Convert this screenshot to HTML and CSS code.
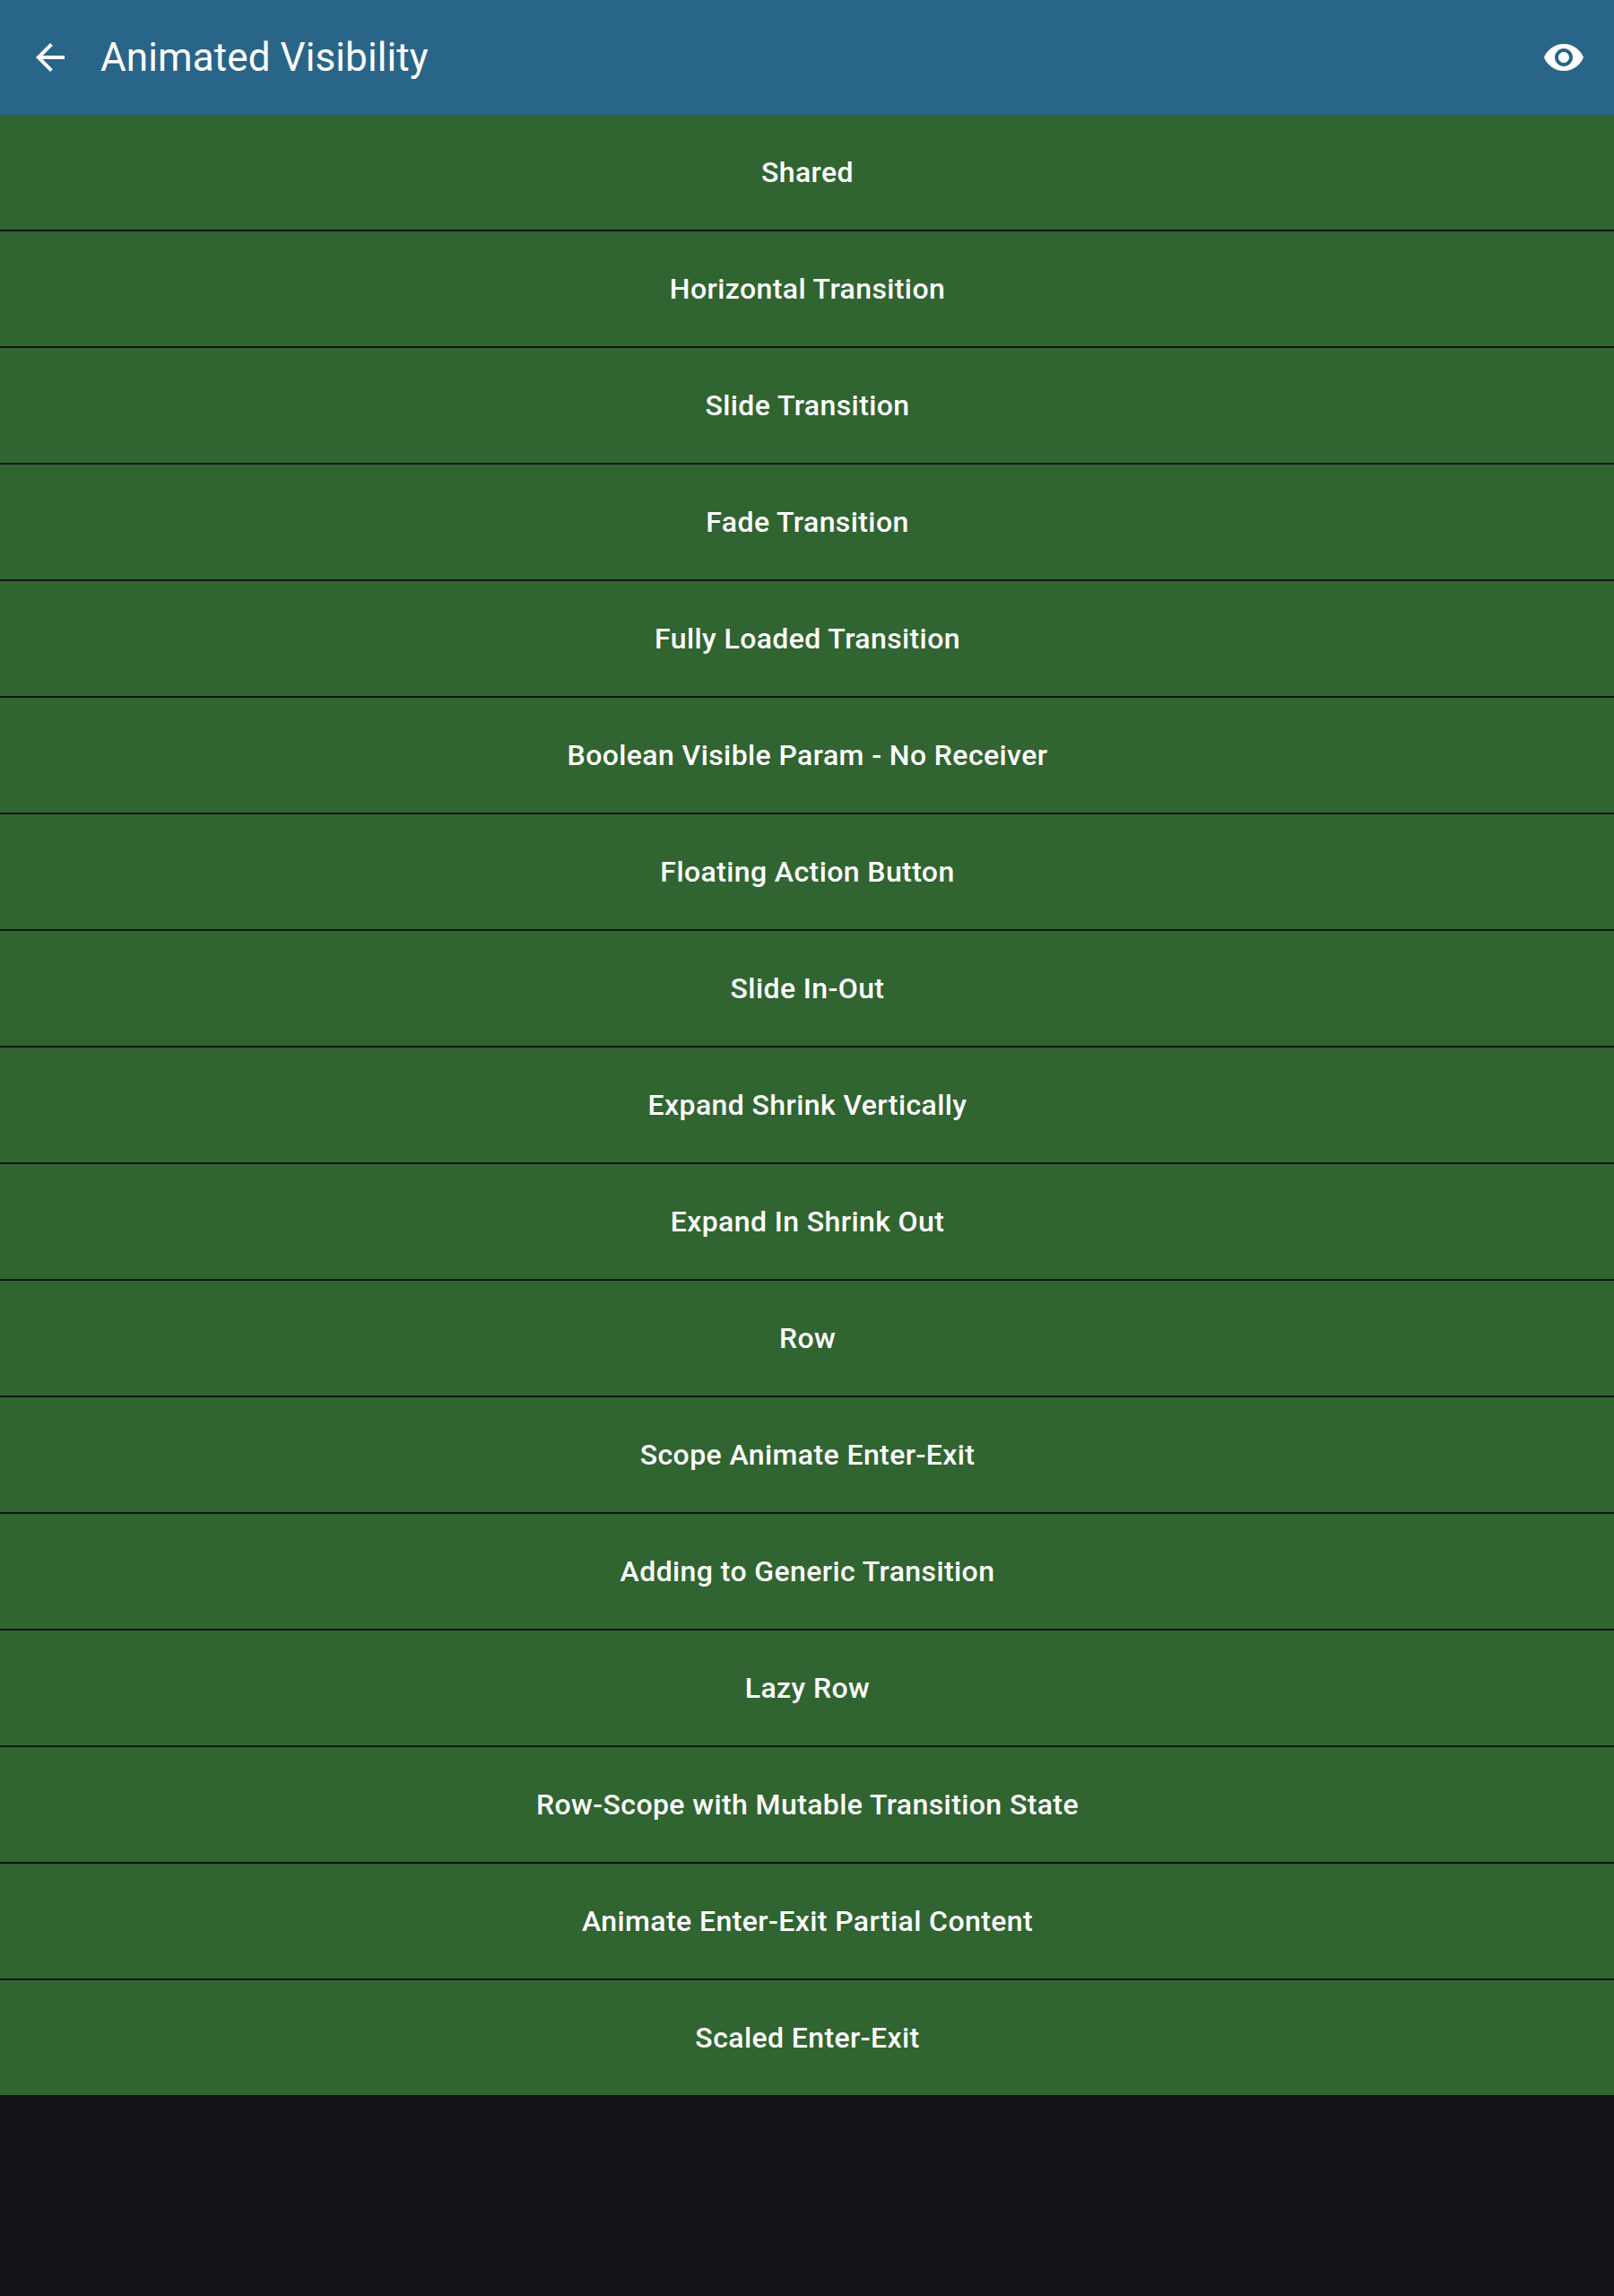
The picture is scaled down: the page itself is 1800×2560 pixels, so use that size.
FILE: index.html
```html
<!DOCTYPE html>
<html lang="en">
<head>
<meta charset="utf-8">
<title>Animated Visibility</title>
<link rel="stylesheet" href="styles.css">
</head>
<body>
<header class="app-bar">
<svg class="icon back" viewBox="0 0 24 24"><path d="M20 11H7.83l5.59-5.59L12 4l-8 8 8 8 1.41-1.41L7.83 13H20v-2z"/></svg>
<h1 class="title">Animated Visibility</h1>
<svg class="icon eye" viewBox="0 0 24 24"><path d="M12 4.5C7 4.5 2.73 7.61 1 12c1.73 4.39 6 7.5 11 7.5s9.27-3.11 11-7.5c-1.73-4.39-6-7.5-11-7.5zM12 17c-2.76 0-5-2.24-5-5s2.24-5 5-5 5 2.24 5 5-2.24 5-5 5zm0-8c-1.66 0-3 1.34-3 3s1.34 3 3 3 3-1.34 3-3-1.34-3-3-3z"/></svg>
</header>
<main class="list">
<button class="item">Shared</button>
<button class="item">Horizontal Transition</button>
<button class="item">Slide Transition</button>
<button class="item">Fade Transition</button>
<button class="item">Fully Loaded Transition</button>
<button class="item">Boolean Visible Param - No Receiver</button>
<button class="item">Floating Action Button</button>
<button class="item">Slide In-Out</button>
<button class="item">Expand Shrink Vertically</button>
<button class="item">Expand In Shrink Out</button>
<button class="item">Row</button>
<button class="item">Scope Animate Enter-Exit</button>
<button class="item">Adding to Generic Transition</button>
<button class="item">Lazy Row</button>
<button class="item">Row-Scope with Mutable Transition State</button>
<button class="item">Animate Enter-Exit Partial Content</button>
<button class="item">Scaled Enter-Exit</button>
</main>
</body>
</html>
```
FILE: styles.css
```css
body {
  margin: 0;
  min-height: 2560px;
  background: #141318;
  color: #fff;
  font-family: Roboto, sans-serif;
}
.app-bar {
  display: flex;
  align-items: center;
  box-sizing: border-box;
  height: 128px;
  padding: 0 32px;
  background: #296588;
}
.icon {
  width: 48px;
  height: 48px;
  fill: #fff;
}
.title {
  flex: 1;
  margin: 0 0 0 32px;
  font-size: 44px;
  font-weight: 400;
  letter-spacing: 0.1px;
}
.list {
  display: flex;
  flex-direction: column;
  gap: 2px;
}
.item {
  height: 128px;
  padding: 0 0 0 1px;
  border: 0;
  background: #306430;
  color: #fff;
  font: 500 32px/48px Roboto, sans-serif;
  letter-spacing: 0.4px;
}
```
